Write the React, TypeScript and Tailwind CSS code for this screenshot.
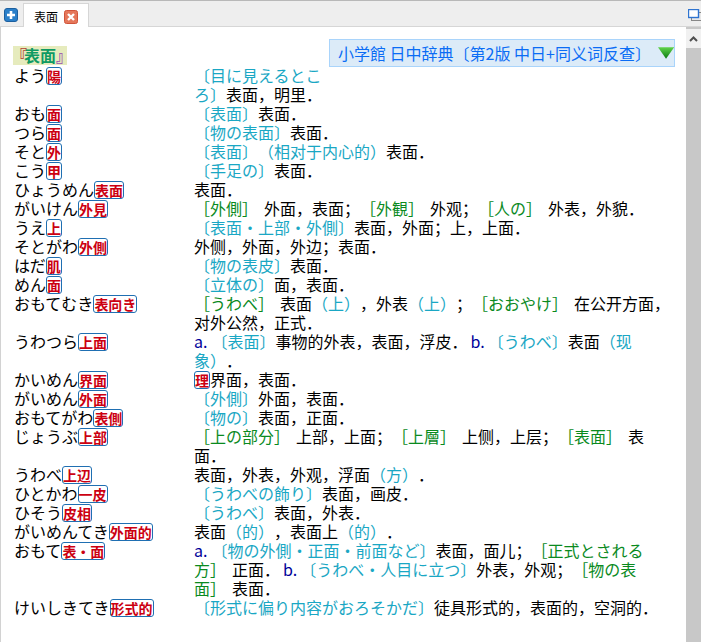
import React from "react";

const C = ({ children }: { children: React.ReactNode }) => <span className="text-[#1aa7c4]">{children}</span>;
const G = ({ children }: { children: React.ReactNode }) => <span className="text-[#0a8a1e] mr-[6px]">{children}</span>;
const A = () => <span className="text-[#000099] mr-[4px]">a.</span>;
const B = () => <span className="text-[#000099] ml-[3px] mr-[3px]">b.</span>;

const Row = ({ k, tag, narrow, children }: { k: string; tag: string; narrow?: boolean; children: React.ReactNode }) => (
  <>
    <div className="whitespace-nowrap">
      {k}
      <span className="inline-block align-top h-[18px] mt-[1px] px-0 border border-[#1f6fb2] rounded-[3px] text-[14px] leading-[16px] font-bold text-[#cc0011] bg-white">
        {tag}
      </span>
    </div>
    <div className={narrow ? "w-[130px]" : "w-[478px]"}>{children}</div>
  </>
);

export default function App() {
  return (
    <div
      className="w-[701px] h-[642px] overflow-hidden bg-white flex flex-col text-[16px] leading-[19px] text-black [text-spacing-trim:space-all]"
      style={{ fontFamily: '"Noto Sans CJK SC", "Noto Sans CJK JP", sans-serif' }}
    >
      {/* tab bar */}
      <div className="h-[27px] shrink-0 bg-[#eeeeee] border-t border-t-[#b8b8b8] border-b border-b-[#d6d6d6] flex items-start pl-[4px] relative">
        <svg className="mt-[7px]" width="14" height="14" viewBox="0 0 14 14">
          <rect x="0.5" y="0.5" width="13" height="13" rx="2.5" fill="#2a7fc9" stroke="#1c5f9e" />
          <path d="M7 3v8M3 7h8" stroke="#fff" strokeWidth="2.6" />
        </svg>
        <div className="ml-[5px] mt-[2px] w-[66px] h-[24px] bg-white border border-[#d6d6d6] border-b-0 flex items-center pl-[10px] gap-[6px]">
          <span className="text-[12px] leading-[14px] mt-[2px]">表面</span>
          <svg className="mt-[2px]" width="14" height="14" viewBox="0 0 14 14">
            <rect x="0.5" y="0.5" width="13" height="13" rx="2" fill="#e5775a" stroke="#d0543a" />
            <path d="M4 4l6 6M10 4l-6 6" stroke="#fff" strokeWidth="2.4" />
          </svg>
        </div>
        <svg className="absolute left-[688px] top-[8px]" width="13" height="14" viewBox="0 0 13 14">
          <rect x="3.5" y="3.5" width="10" height="8" fill="#e8e8e8" stroke="#888" />
          <rect x="0.5" y="0.5" width="10" height="8" fill="#fff" stroke="#2f74d0" strokeWidth="1.4" />
        </svg>
      </div>

      <div className="flex-1 flex min-h-0">
        {/* content */}
        <div className="w-[686px] border-l border-l-[#d2d2d2] pl-[12px]">
          <div className="flex justify-between items-end pt-[12px] pr-[11px]">
            <div className="h-[19px] mb-[2px] w-[54px] bg-[#e6ebbd] font-bold text-[#0f9a63] whitespace-nowrap">
              <span className="text-[#b2402f] ml-[-2px] tracking-[-3px]">『</span>表面<span className="text-[#9a4fb0] tracking-[-5px]">』</span>
            </div>
            <div className="h-[28px] w-[346px] bg-[#dcebf8] border border-[#a9d4fb] flex items-center pl-[8px] text-[#0a6cf5] whitespace-nowrap">
              <span>小学館 日中辞典〔第2版 中日+同义词反查〕</span>
              <svg className="ml-[7px]" width="17" height="12" viewBox="0 0 17 12">
                <defs>
                  <linearGradient id="tri" x1="0" y1="0" x2="0" y2="1">
                    <stop offset="0" stopColor="#5fd34a" />
                    <stop offset="1" stopColor="#0b7a12" />
                  </linearGradient>
                </defs>
                <path d="M0 0h17L8.5 12z" fill="url(#tri)" />
              </svg>
            </div>
          </div>

          <div className="grid grid-cols-[180px_478px] pl-[1px] mt-[-1px]">
            <Row k="よう" tag="陽" narrow><C>〔目に見えるところ〕</C>表面，明里．</Row>
            <Row k="おも" tag="面"><C>〔表面〕</C>表面．</Row>
            <Row k="つら" tag="面"><C>〔物の表面〕</C>表面．</Row>
            <Row k="そと" tag="外"><C>〔表面〕（相对于内心的）</C>表面．</Row>
            <Row k="こう" tag="甲"><C>〔手足の〕</C>表面．</Row>
            <Row k="ひょうめん" tag="表面">表面．</Row>
            <Row k="がいけん" tag="外見"><G>［外側］</G>外面，表面；<G>［外観］</G>外观；<G>［人の］</G>外表，外貌．</Row>
            <Row k="うえ" tag="上"><C>〔表面・上部・外側〕</C>表面，外面；上，上面．</Row>
            <Row k="そとがわ" tag="外側">外侧，外面，外边；表面．</Row>
            <Row k="はだ" tag="肌"><C>〔物の表皮〕</C>表面．</Row>
            <Row k="めん" tag="面"><C>〔立体の〕</C>面，表面．</Row>
            <Row k="おもてむき" tag="表向き"><G>［うわべ］</G>表面<C>（上）</C>，外表<C>（上）</C>；<G>［おおやけ］</G>在公开方面，对外公然，正式．</Row>
            <Row k="うわつら" tag="上面"><A /><C>〔表面〕</C>事物的外表，表面，浮皮．<B /><C>〔うわべ〕</C>表面<C>（现象）</C>．</Row>
            <Row k="かいめん" tag="界面">
              <span className="inline-block align-top h-[18px] mt-[1px] border border-[#1f6fb2] rounded-[3px] text-[14px] leading-[16px] font-bold text-[#cc0011]">理</span>界面，表面．
            </Row>
            <Row k="がいめん" tag="外面"><C>〔外側〕</C>外面，表面．</Row>
            <Row k="おもてがわ" tag="表側"><C>〔物の〕</C>表面，正面．</Row>
            <Row k="じょうぶ" tag="上部"><G>［上の部分］</G>上部，上面；<G>［上層］</G>上侧，上层；<G>［表面］</G>表面．</Row>
            <Row k="うわべ" tag="上辺">表面，外表，外观，浮面<C>（方）</C>．</Row>
            <Row k="ひとかわ" tag="一皮"><C>〔うわべの飾り〕</C>表面，画皮．</Row>
            <Row k="ひそう" tag="皮相"><C>〔うわべ〕</C>表面，外表．</Row>
            <Row k="がいめんてき" tag="外面的">表面<C>（的）</C>，表面上<C>（的）</C>．</Row>
            <Row k="おもて" tag="表・面"><A /><C>〔物の外側・正面・前面など〕</C>表面，面儿；<G>［正式とされる方］</G>正面．<B /><C>〔うわべ・人目に立つ〕</C>外表，外观；<G>［物の表面］</G>表面．</Row>
            <Row k="けいしきてき" tag="形式的"><C>〔形式に偏り内容がおろそかだ〕</C>徒具形式的，表面的，空洞的．</Row>
          </div>
        </div>

        {/* scrollbar */}
        <div className="w-[15px] flex flex-col bg-[#c8c8c8]">
          <div className="h-[19px] bg-[#f1f1f1] mt-[2px] flex items-center justify-center">
            <svg width="9" height="6" viewBox="0 0 9 6">
              <path d="M1 5l3.5-3.5L8 5" fill="none" stroke="#505050" strokeWidth="2" />
            </svg>
          </div>
        </div>
      </div>
    </div>
  );
}
